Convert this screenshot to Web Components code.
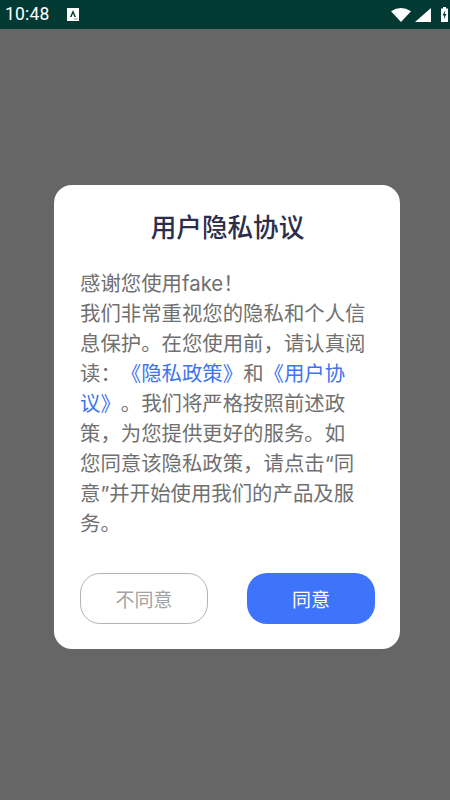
<!DOCTYPE html>
<html lang="zh-CN"><head><meta charset="utf-8"><style>
html,body{margin:0;padding:0;height:100%;background:#666}
body{width:450px;height:800px;overflow:hidden;display:flex;flex-direction:column;font-family:Inter,"Noto Sans CJK SC",sans-serif}
</style></head><body>
<status-bar></status-bar>
<dialog-scrim>
<privacy-dialog heading="用户隐私协议">
<div>感谢您使用fake！</div>
<div>我们非常重视您的隐私和个人信<br>息保护。在您使用前，请认真阅<br>读：<a-link>《隐私政策》</a-link>和<a-link>《用户协<br>议》</a-link>。我们将严格按照前述政<br>策，为您提供更好的服务。如<br>您同意该隐私政策，请点击“同<br>意”并开始使用我们的产品及服<br>务。</div>
<pill-button slot="actions" variant="outline">不同意</pill-button>
<pill-button slot="actions" variant="primary">同意</pill-button>
</privacy-dialog>
</dialog-scrim>
<script>
function def(name,html){customElements.define(name,class extends HTMLElement{constructor(){super();this.attachShadow({mode:'open'}).innerHTML=html;}});}
def('status-bar',`<style>
:host{display:flex;align-items:center;height:29px;flex:none;background:#023a33;color:#fff;padding:0 2px 0 5px;box-sizing:border-box;font:17.5px/29px Roboto,sans-serif;letter-spacing:.2px}
.t{width:62px}
.sp{flex:1}
svg{display:block}
</style><span class="t">10:48</span>
<svg width="12" height="13" viewBox="0 0 12 13"><path d="M0 0h12v13H0z" fill="#fff"/><path d="M6 2 3 9h1.6L6 5.6 7.4 9H9z" fill="#023a33"/><path d="M7 10.5h3.5v1.2H7z" fill="#9aa"/></svg>
<span class="sp"></span>
<svg width="20" height="14" viewBox="0 0 20 14" style="margin-right:4px"><path d="M0 3.2Q10-3 20 3.2L10 14z" fill="#fff"/></svg>
<svg width="16" height="14" viewBox="0 0 16 14" style="margin-right:10px"><path d="M16 0V14H0z" fill="#fff"/></svg>
<svg width="7" height="15" viewBox="0 0 7 15"><path d="M2 0h3v1.5H7V15H0V1.5h2z" fill="#fff"/><path d="M4.3 3.2 1.6 8.4h1.7L2.8 12.6 5.5 7H3.8z" fill="#023a33"/></svg>`);
def('dialog-scrim',`<style>:host{display:flex;flex:1;align-items:flex-start;justify-content:center;padding:156px 0 0 4px}</style><slot></slot>`);
customElements.define('privacy-dialog',class extends HTMLElement{constructor(){super();this.attachShadow({mode:'open'}).innerHTML=`<style>
:host{display:block;box-sizing:border-box;width:346px;background:#fff;border-radius:18px;padding:26px 25px 25px 26px}
h2{margin:0 0 24px;text-align:center;font:500 25.6px/34px Inter,"Noto Sans CJK SC",sans-serif;color:#2b2e4a}
.b{font-size:20.4px;line-height:30px;color:#707070;text-spacing-trim:space-all;white-space:nowrap;padding-bottom:34px}
.a{display:flex;justify-content:space-between}
</style><h2>${this.getAttribute('heading')}</h2><div class="b"><slot></slot></div><div class="a"><slot name="actions"></slot></div>`;}});
def('a-link',`<style>:host{display:inline;color:#3c74f0}</style><slot></slot>`);
customElements.define('pill-button',class extends HTMLElement{constructor(){super();const p=this.getAttribute('variant')==='primary';this.attachShadow({mode:'open'}).innerHTML=`<style>
:host{display:flex;align-items:center;justify-content:center;box-sizing:border-box;width:128px;height:51px;border-radius:20px;font-size:19px;${p?'background:#3e74fb;color:#fff':'background:#fff;color:#a3a3a3;border:1.5px solid #b4b4b4'}}
</style><slot></slot>`;}});
</script>
</body></html>
